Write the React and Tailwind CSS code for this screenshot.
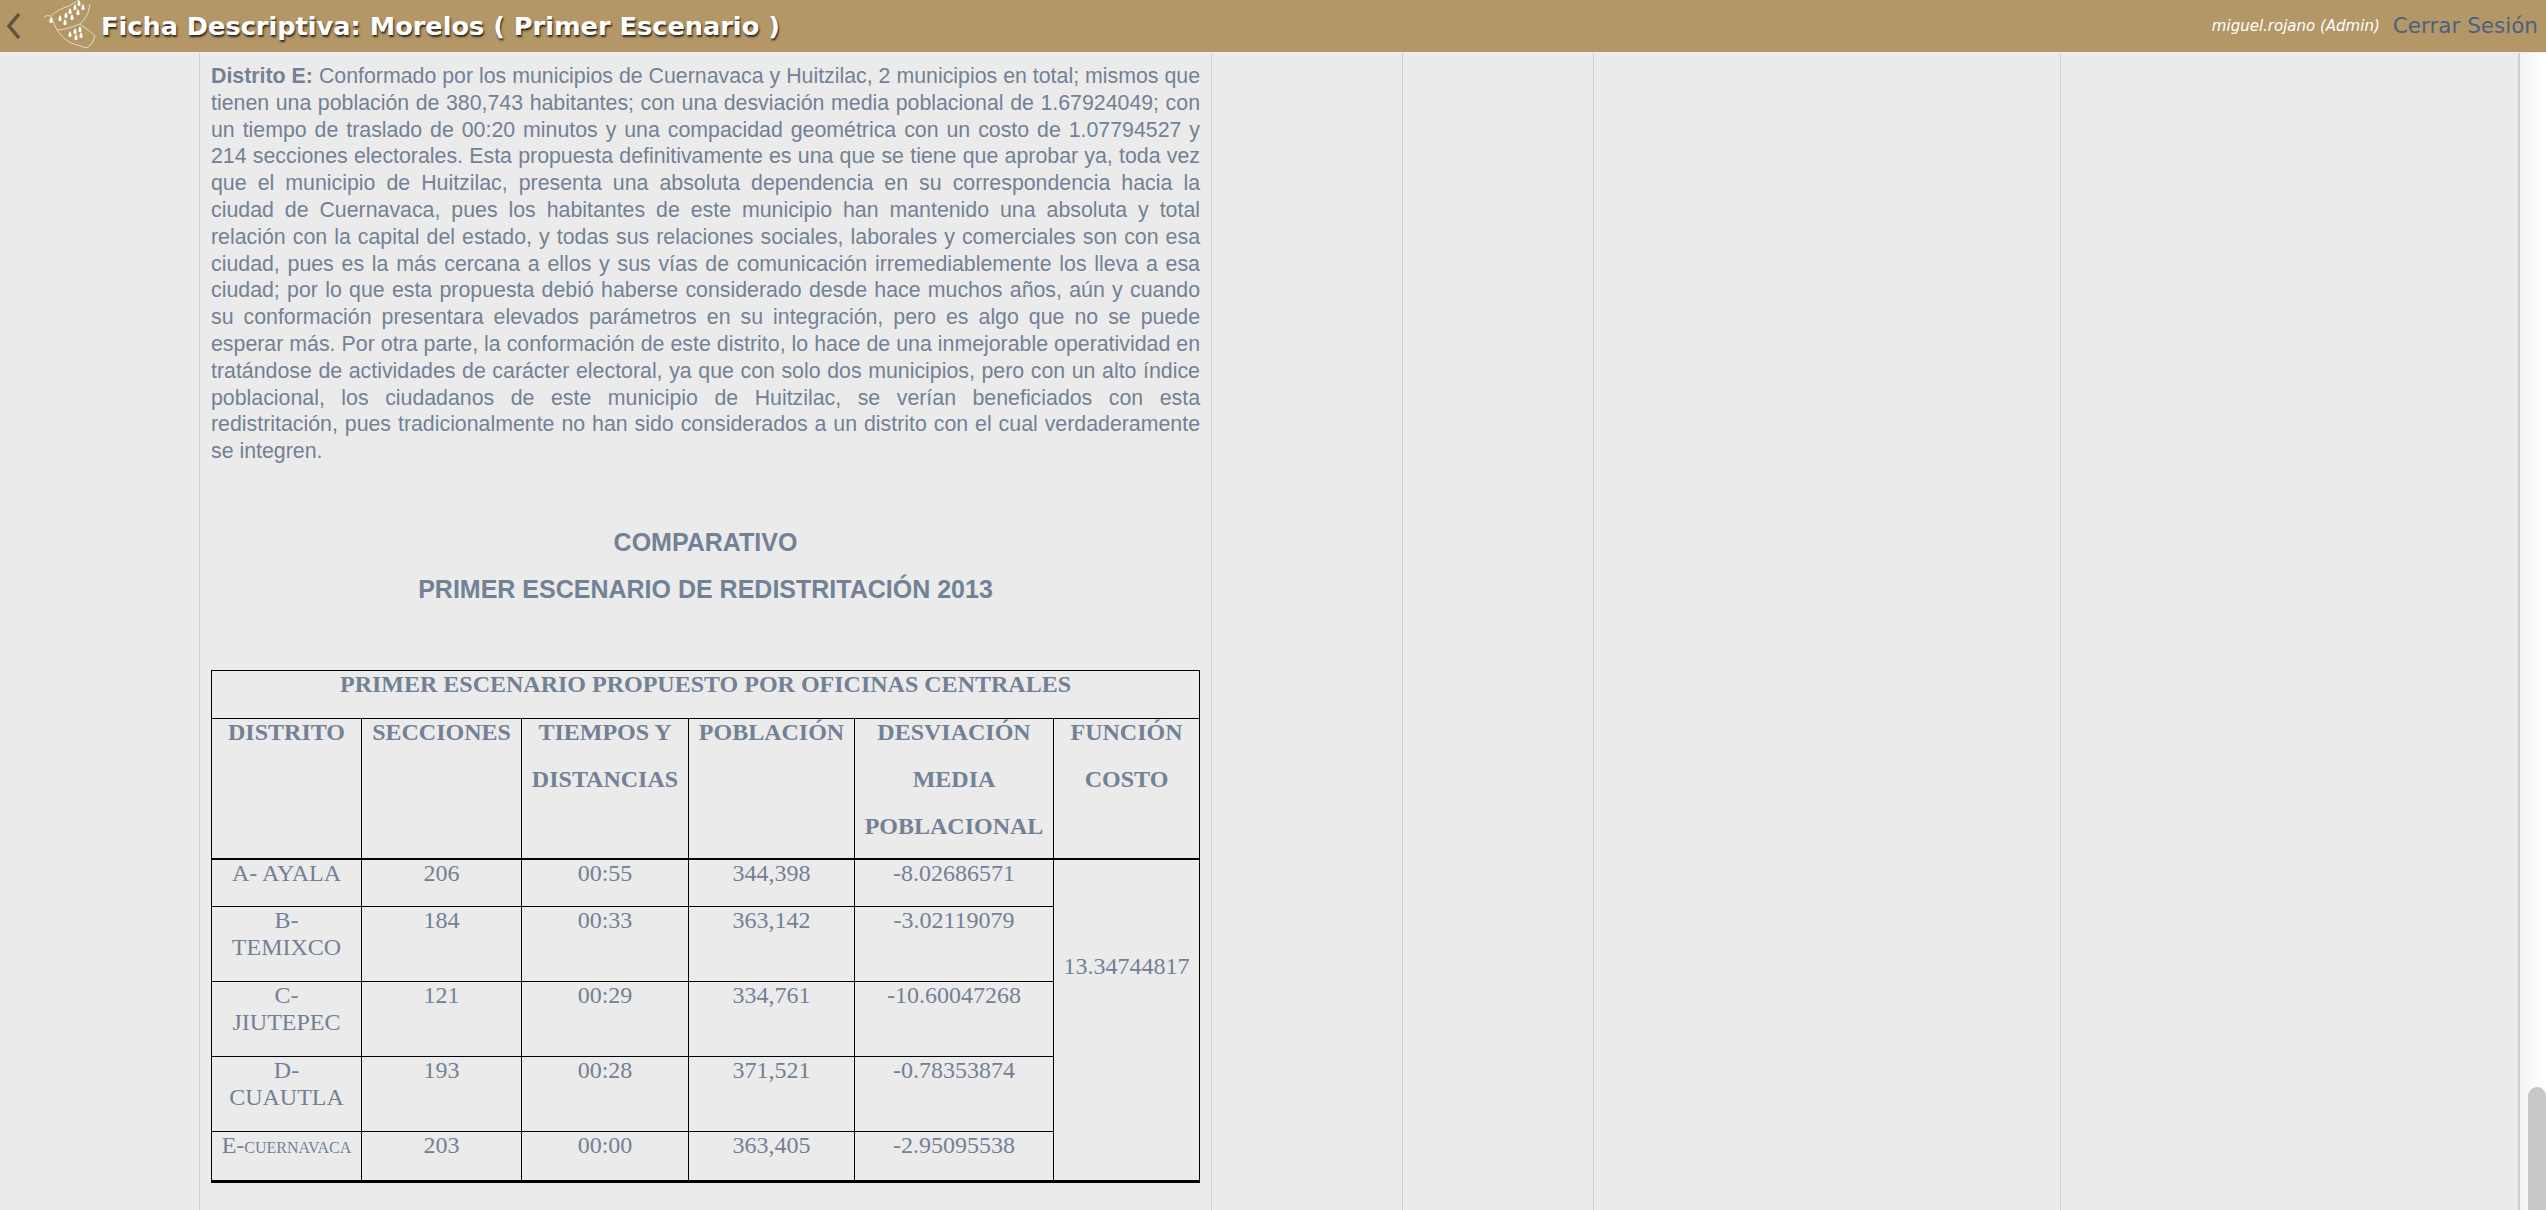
const body = [
  [<>A- AYALA</>, '206', '00:55', '344,398', '-8.02686571'],
  [<>B-<br />TEMIXCO</>, '184', '00:33', '363,142', '-3.02119079'],
  [<>C-<br />JIUTEPEC</>, '121', '00:29', '334,761', '-10.60047268'],
  [<>D-<br />CUAUTLA</>, '193', '00:28', '371,521', '-0.78353874'],
]

const rowHeights = ['h-[47px]', 'h-[75px]', 'h-[75px]', 'h-[75px]']

const drops = [[37, 4], [41, 8], [33, 8], [36, 13], [28, 12], [24, 16], [30, 18], [18, 19], [23, 23], [38, 30], [33, 32], [28, 35], [34, 38], [39, 36], [9, 21]]

const Logo = () => (
  <svg viewBox="0 0 56 52" className="h-[52px] w-[56px] shrink-0" fill="none" stroke="#f4ecd8" strokeWidth=".8">
    <path d="M2 17 C5 15 8 15 10 18 C12 24 14 30 20 36 C24 41 30 44 36 45 L44 48 C47 47 50 44 51 41 L53 36 C50 33 46 30 42 27 C40 26 39 25 38 24 C42 20 46 15 47 9 L48 4" />
    <path d="M38 24 C30 27 22 30 15 30 M9 16 C13 12 20 8 27 6 L37 0" />
    {drops.map(([x, y]) => (
      <path key={`${x}-${y}`} d={`M${x} ${y - 4}c1 2 1.6 3 1.6 4.4a1.6 1.6 0 0 1-3.2 0c0-1.4.6-2.4 1.6-4.4z`} fill="#fff" stroke="none" />
    ))}
  </svg>
)

const Th = ({ children }) => (
  <th className="border border-black align-top font-bold leading-[47px]">
    <div className="-mt-[10px]">{children}</div>
  </th>
)

const Td = ({ children }) => (
  <td className="border border-black align-top text-center leading-[27px]">{children}</td>
)

const App = () => (
  <div className="flex h-screen flex-col overflow-hidden bg-[#ebebeb] font-['Liberation_Sans',sans-serif] text-[#728195]">
    <header className="flex h-[53px] shrink-0 items-center border-b border-[#f4efe2] bg-[#b39767] font-['DejaVu_Sans',sans-serif]">
      <svg viewBox="0 0 16 28" className="ml-[6px] h-[28px] w-[16px] shrink-0" fill="none" stroke="#5c5444" strokeWidth="3.5">
        <path d="M13 2 L3 14 L13 26" />
      </svg>
      <div className="ml-[20px]"><Logo /></div>
      <h1 className="ml-[3px] whitespace-nowrap text-[25.6px] font-bold text-white [text-shadow:1px_2px_2px_#2e2618]">
        Ficha Descriptiva: Morelos ( Primer Escenario )
      </h1>
      <span className="ml-auto text-[15px] italic text-white">miguel.rojano (Admin)</span>
      <span className="ml-[13px] mr-[8px] text-[21.5px] text-[#4a6282]">Cerrar Sesión</span>
    </header>

    <div className="flex min-h-0 flex-1">
      <div className="w-[199px] shrink-0" />
      <main className="w-[1013px] shrink-0 border-x border-[#cfcfcf] px-[11px] pt-[10px]">
        <p className="text-justify text-[21.33px] leading-[26.8px]">
          <b>Distrito E:</b> Conformado por los municipios de Cuernavaca y Huitzilac, 2 municipios en total; mismos que tienen una población de 380,743 habitantes; con una desviación media poblacional de 1.67924049; con un tiempo de traslado de 00:20 minutos y una compacidad geométrica con un costo de 1.07794527 y 214 secciones electorales. Esta propuesta definitivamente es una que se tiene que aprobar ya, toda vez que el municipio de Huitzilac, presenta una absoluta dependencia en su correspondencia hacia la ciudad de Cuernavaca, pues los habitantes de este municipio han mantenido una absoluta y total relación con la capital del estado, y todas sus relaciones sociales, laborales y comerciales son con esa ciudad, pues es la más cercana a ellos y sus vías de comunicación irremediablemente los lleva a esa ciudad; por lo que esta propuesta debió haberse considerado desde hace muchos años, aún y cuando su conformación presentara elevados parámetros en su integración, pero es algo que no se puede esperar más. Por otra parte, la conformación de este distrito, lo hace de una inmejorable operatividad en tratándose de actividades de carácter electoral, ya que con solo dos municipios, pero con un alto índice poblacional, los ciudadanos de este municipio de Huitzilac, se verían beneficiados con esta redistritación, pues tradicionalmente no han sido considerados a un distrito con el cual verdaderamente se integren.
        </p>

        <div className="mt-[54px] text-center text-[25px] font-bold leading-[47px]">
          <div>COMPARATIVO</div>
          <div>PRIMER ESCENARIO DE REDISTRITACIÓN 2013</div>
        </div>

        <table className="mt-[57px] w-[988px] table-fixed border-collapse border-b-[3px] border-black bg-transparent text-center font-['Liberation_Serif',serif] text-[24px]">
          <colgroup>
            <col className="w-[150px]" />
            <col className="w-[160px]" />
            <col className="w-[167px]" />
            <col className="w-[166px]" />
            <col className="w-[199px]" />
            <col className="w-[146px]" />
          </colgroup>
          <tbody>
            <tr className="h-[48px]">
              <th colSpan={6} className="border border-black align-top font-bold leading-[27px]">PRIMER ESCENARIO PROPUESTO POR OFICINAS CENTRALES</th>
            </tr>
            <tr className="h-[141px] border-b-[2px] border-black">
              <Th>DISTRITO</Th>
              <Th>SECCIONES</Th>
              <Th>TIEMPOS Y DISTANCIAS</Th>
              <Th>POBLACIÓN</Th>
              <Th>DESVIACIÓN MEDIA POBLACIONAL</Th>
              <Th>FUNCIÓN COSTO</Th>
            </tr>
            {body.map((row, i) => (
              <tr key={row[1]} className={rowHeights[i]}>
                {row.map((cell, j) => <Td key={j}>{cell}</Td>)}
                {i === 0 && (
                  <td rowSpan={5} className="border border-black pb-[109px] align-middle">13.34744817</td>
                )}
              </tr>
            ))}
            <tr className="h-[50px]">
              <Td><span className="whitespace-nowrap">E-<span className="text-[16px]">CUERNAVACA</span></span></Td>
              <Td>203</Td>
              <Td>00:00</Td>
              <Td>363,405</Td>
              <Td>-2.95095538</Td>
            </tr>
          </tbody>
        </table>
      </main>
      <div className="w-[191px] shrink-0 border-r border-[#cfcfcf]" />
      <div className="w-[191px] shrink-0 border-r border-[#cfcfcf]" />
      <div className="w-[467px] shrink-0 border-r border-[#cfcfcf]" />
      <div className="w-[459px] shrink-0 border-r-[2px] border-[#cfcfcf]" />
      <div className="flex flex-1 flex-col justify-end bg-gradient-to-r from-[#f4f4f4] to-white pl-[8px]">
        <div className="h-[123px] rounded-t-full bg-[#c8c8c8]" />
      </div>
    </div>
  </div>
)

export default App
